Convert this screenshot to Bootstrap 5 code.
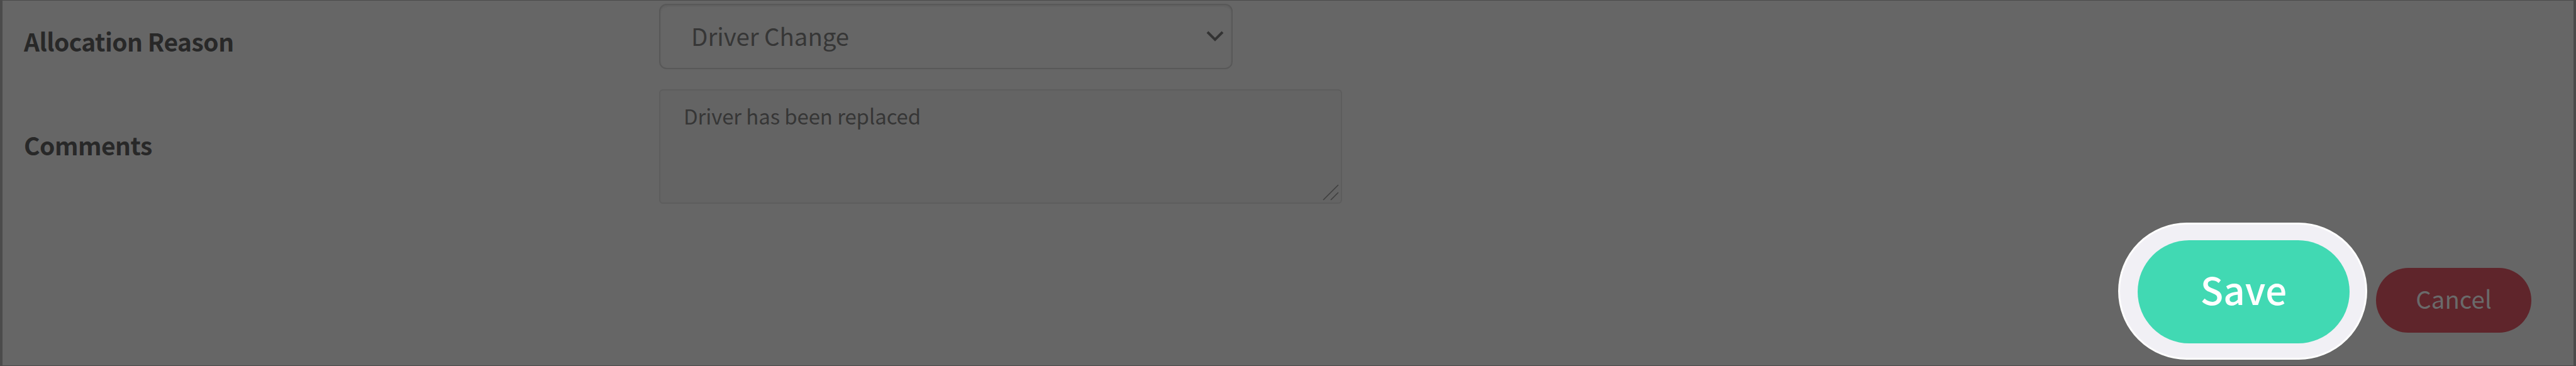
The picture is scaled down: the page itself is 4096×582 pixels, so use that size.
<!DOCTYPE html>
<html lang="en">
<head>
    <meta charset="utf-8">
    <title>Driver Allocation</title>
    <link href="https://cdn.jsdelivr.net/npm/bootstrap@5.3.3/dist/css/bootstrap.min.css" rel="stylesheet">
    <style>
        body {
            font-family: "Noto Sans CJK JP", "Noto Sans", sans-serif;
            background: #666;
            color: #282828;
        }
        .panel {
            height: 582px;
            border: solid #4b4b4b;
            border-width: 1px 4px;
            padding: 5px 67px 0 34px;
        }
        .field-label {
            width: 1010px;
            font-size: 39px;
            line-height: 56px;
            letter-spacing: -.55px;
        }
        .label-reason { padding-top: 13px; }
        .label-comments { padding-bottom: 6px; }
        .reason-select {
            width: 912px;
            height: 104px;
            padding: 0 60px 3px 49px;
            border: 2px solid #585858;
            border-radius: 12px;
            box-shadow: inset 0 2px 3px rgba(0, 0, 0, .08);
            color: #363636;
            font-size: 38.5px;
            letter-spacing: -.1px;
            background: #666 url("data:image/svg+xml,%3Csvg xmlns='http://www.w3.org/2000/svg' width='28' height='18' fill='none' stroke='%23333' stroke-width='4'%3E%3Cpath d='M2 2l12 12L26 2'/%3E%3C/svg%3E") no-repeat right 12px top 41px;
        }
        .comments-box {
            width: 1086px;
            height: 182px;
            padding: 16px 37px;
            border: 2px solid #5d5d5d;
            border-radius: 6px;
            color: #363636;
            font-size: 33px;
            line-height: 48px;
            letter-spacing: -.12px;
            resize: none;
            background: #646464 url("data:image/svg+xml,%3Csvg xmlns='http://www.w3.org/2000/svg' width='26' height='26' fill='none' stroke='%23404040' stroke-width='1.7'%3E%3Cpath d='M1 25L25 1M13 25l12-12'/%3E%3C/svg%3E") no-repeat right 3px bottom 3px;
        }
        .actions {
            margin-top: 30px;
            gap: 14px;
        }
        /* highlighted button with its ring */
        .save-ring {
            width: 396px;
            height: 218px;
            padding: 25px 25px 23px 28px;
            border: 3px solid #fff;
            background: #f1f0f5;
        }
        .btn-save {
            padding: 0 0 11px;
            background: #41d9b3;
            color: #fff;
            font-size: 60px;
            font-weight: 500;
        }
        .btn-cancel {
            width: 247px;
            height: 103px;
            margin-top: 72px;
            padding: 0 0 6px;
            background: #5f252b;
            color: #6a6a6a;
            font-size: 38.5px;
        }
    </style>
</head>
<body>
    <form class="panel overflow-hidden">
        <div class="d-flex align-items-center mb-4 pb-2">
            <label for="reason" class="field-label label-reason fw-bold">Allocation Reason</label>
            <select id="reason" class="form-select reason-select">
                <option>Driver Change</option>
            </select>
        </div>
        <div class="d-flex align-items-center">
            <label for="comments" class="field-label label-comments fw-bold">Comments</label>
            <textarea id="comments" class="form-control comments-box">Driver has been replaced</textarea>
        </div>
        <div class="d-flex justify-content-end align-items-start actions">
            <div class="save-ring rounded-pill d-flex">
                <button type="button" class="btn btn-save rounded-pill border-0 flex-fill">Save</button>
            </div>
            <button type="button" class="btn btn-cancel rounded-pill border-0">Cancel</button>
        </div>
    </form>
    <script src="https://cdn.jsdelivr.net/npm/bootstrap@5.3.3/dist/js/bootstrap.bundle.min.js"></script>
</body>
</html>
